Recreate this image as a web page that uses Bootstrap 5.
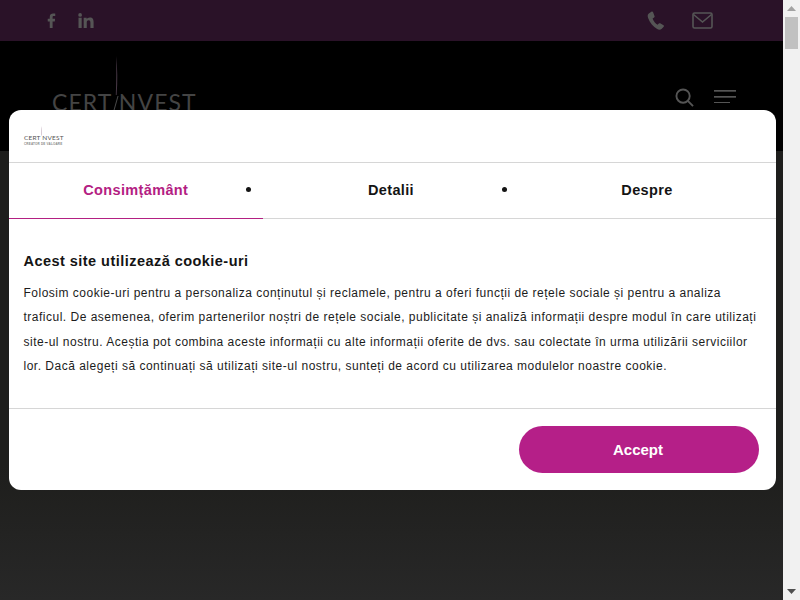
<!DOCTYPE html>
<html lang="ro">
<head>
    <meta charset="UTF-8">
    <title>Certinvest</title>
    <link href="https://cdn.jsdelivr.net/npm/bootstrap@5.3.0/dist/css/bootstrap.min.css" rel="stylesheet">
    <style>
        html, body { height: 100%; overflow: hidden; }
        body { font-family: "Liberation Sans", Arial, sans-serif; background: #262626; }
        .page-wrap { height: 600px; }
        .page-main { width: 783px; }
        .top-strip { height: 41px; background: #2a1228; padding: 0 70px 0 47px; }
        .social-icons { gap: 20px; }
        .contact-icons { gap: 27px; }
        .site-head { height: 110px; background: #000; padding: 0 47px 0 52px; }
        .hero-area { background: linear-gradient(#1e1e1c 70%, #282828); }
        .site-logo { width: 146px; height: 110px; }
        .site-logo svg { position: absolute; left: 0; top: 0; }
        .site-logo span { position: absolute; left: 0; top: 46px; font: 400 23px/30px Lato, sans-serif; letter-spacing: 1.1px; color: #444; white-space: nowrap; }
        .hdr-icons { gap: 20px; padding-top: 47px; }
        .fake-scroll { width: 17px; background: #f1f1f1; }
        .fake-scroll .thumb { height: 32px; margin: 0 2px; background: #c1c1c1; }
        .scroll-up, .scroll-down { height: 17px; }

        .consent-box { position: absolute; left: 8.5px; top: 110px; width: 767px; height: 380px; border-radius: 12px; background: #fff; color: #141414; overflow: hidden; }
        .consent-logo { height: 53px; padding: 16px 15.5px; border-bottom: 1px solid #d6d6d6; }
        .small-logo { width: 42px; height: 21px; }
        .small-logo svg { position: absolute; left: 0; top: 0; }
        .small-logo b { position: absolute; left: 0; top: 8px; font: 400 6.5px/8px Lato, sans-serif; letter-spacing: .2px; color: #555; white-space: nowrap; }
        .small-logo i { position: absolute; left: 0; top: 16px; font: 700 3px/4px "Liberation Sans", sans-serif; letter-spacing: .2px; color: #888; font-style: normal; white-space: nowrap; }
        .consent-tabs { height: 56px; margin: 0; padding: 0; border-bottom: 1px solid #d6d6d6; }
        .consent-tabs li { flex: 0 0 256px; height: 56px; line-height: 54px; text-align: center; font-size: 14.5px; font-weight: 700; letter-spacing: .35px; }
        .consent-tabs li::marker { font-size: 17px; letter-spacing: -1px; }
        .consent-tabs li.current { flex-basis: 254.5px; color: #b32082; border-bottom: 1px solid #b32082; list-style: none; }
        .consent-body { height: 190px; padding: 30px 15px 0; border-bottom: 1px solid #d6d6d6; }
        .consent-body h1 { font-size: 14.5px; font-weight: 700; line-height: 24px; letter-spacing: .46px; margin: 0 0 8px; }
        .consent-body p { font-size: 12px; line-height: 24.4px; letter-spacing: .5px; margin: 0; color: #1c1c1c; }
        .consent-foot { padding: 17px 17px 0 0; }
        .btn-accept { width: 240px; height: 47px; border-radius: 24px; background: #b51f88; border: 0; color: #fff; font-size: 15px; font-weight: 700; padding: 1px 1px 0 0; }
    </style>
</head>
<body>
    <div class="page-wrap d-flex position-relative">
        <div class="page-main d-flex flex-column">
            <!-- top strip -->
            <div class="top-strip d-flex align-items-center justify-content-between">
                <div class="d-flex align-items-center social-icons">
                    <svg width="11" height="15" viewBox="0 0 12 17" preserveAspectRatio="none" fill="#555"><path d="M3 17V9.500H.8V6.600H3V4.400C3 1.800 4.500.6 6.800.6c1 0 1.900.1 2.200.1v2.600H7.500c-1.200 0-1.400.6-1.400 1.400v1.900h2.800l-.4 2.900H6.100V17z"/></svg>
                    <svg width="16" height="15" viewBox="0 0 17 16" fill="#555"><rect x=".5" y="5" width="3.400" height="11"/><circle cx="2.200" cy="2" r="2"/><path d="M6 5h3.200v1.500C9.800 5.500 11 4.700 12.600 4.700c3.200 0 4 2 4 5V16h-3.400v-5.500c0-1.400-.2-2.900-1.900-2.900s-2 1.300-2 2.800V16H6z"/></svg>
                </div>
                <div class="d-flex align-items-center contact-icons">
                    <svg width="18" height="19" viewBox="0 0 18 19" fill="#555"><path d="M4.700.6 1.800 2.400C.5 3.300.4 5 1.200 7.300c1.600 4.600 5 8.600 9 10.800 1.800 1 3.500.6 4.600-.4l1.900-2c.4-.5.3-1.100-.2-1.400l-3.300-2c-.5-.3-1-.2-1.400.2l-1.200 1.200c-2.200-1.200-4-3.600-5-6.300l1.500-.9c.5-.3.600-.8.500-1.300L6 1c-.2-.5-.8-.7-1.300-.4z"/></svg>
                    <svg width="21" height="17" viewBox="0 0 21 17" fill="none" stroke="#555" stroke-width="1.600"><rect x="1" y="1" width="19" height="15" rx="1.500"/><path d="M1.500 2.500 10.500 10l9-7.500"/></svg>
                </div>
            </div>
            <!-- logo and nav -->
            <div class="site-head d-flex justify-content-between">
                <div class="site-logo position-relative">
                    <span>CERT&nbsp;NVEST</span>
                    <svg width="146" height="110" viewBox="0 0 146 110" fill="#4a3a48"><path d="M64 15c1.500 12 1.700 26 .6 39l-.8 0c.6-13 .7-27 .2-39z"/><path d="M65.500 55l1 0-4.500 16h-1z" fill="#4a4a4a"/></svg>
                </div>
                <div class="d-flex align-items-start hdr-icons">
                    <svg width="19" height="19" viewBox="0 0 20 20" fill="none" stroke="#555" stroke-width="2"><circle cx="8.500" cy="8.500" r="7"/><path d="m13.500 13.500 5.500 5.500"/></svg>
                    <svg width="22" height="15" viewBox="0 0 22 15" fill="#555"><rect y="2" width="22" height="1.700"/><rect y="8" width="22" height="1.700"/><rect y="14" width="16" height="1.700"/></svg>
                </div>
            </div>
            <div class="hero-area flex-grow-1"></div>
        </div>

        <!-- scrollbar -->
        <div class="fake-scroll d-flex flex-column">
            <div class="scroll-up d-flex align-items-center justify-content-center"><svg width="9" height="5" viewBox="0 0 9 5" fill="#a3a3a3"><path d="M4.500 0 9 5H0z"/></svg></div>
            <div class="thumb"></div>
            <div class="flex-grow-1"></div>
            <div class="scroll-down d-flex align-items-center justify-content-center"><svg width="9" height="5" viewBox="0 0 9 5" fill="#505050"><path d="M0 0h9L4.500 5z"/></svg></div>
        </div>

        <!-- cookie dialog -->
        <div class="consent-box">
            <div class="consent-logo">
                <div class="small-logo position-relative">
                    <svg width="42" height="21" viewBox="0 0 42 21" fill="#a88aa0"><path d="M17.600 0c.5 3 .5 6 .2 9.500h-.4c.2-3.500.2-6.500.2-9.500z"/></svg>
                    <b>CERT&nbsp;NVEST</b>
                    <i>CREATOR DE VALOARE</i>
                </div>
            </div>
            <ul class="consent-tabs d-flex">
                <li class="current">Consimțământ</li>
                <li>Detalii</li>
                <li>Despre</li>
            </ul>
            <div class="consent-body">
                <h1>Acest site utilizează cookie-uri</h1>
                <p>Folosim cookie-uri pentru a personaliza conținutul și reclamele, pentru a oferi funcții de rețele sociale și pentru a analiza traficul. De asemenea, oferim partenerilor noștri de rețele sociale, publicitate și analiză informații despre modul în care utilizați site-ul nostru. Aceștia pot combina aceste informații cu alte informații oferite de dvs. sau colectate în urma utilizării serviciilor lor. Dacă alegeți să continuați să utilizați site-ul nostru, sunteți de acord cu utilizarea modulelor noastre cookie.</p>
            </div>
            <div class="consent-foot d-flex justify-content-end">
                <button class="btn-accept" type="button">Accept</button>
            </div>
        </div>
    </div>
    <script src="https://cdn.jsdelivr.net/npm/bootstrap@5.3.0/dist/js/bootstrap.bundle.min.js"></script>
</body>
</html>
